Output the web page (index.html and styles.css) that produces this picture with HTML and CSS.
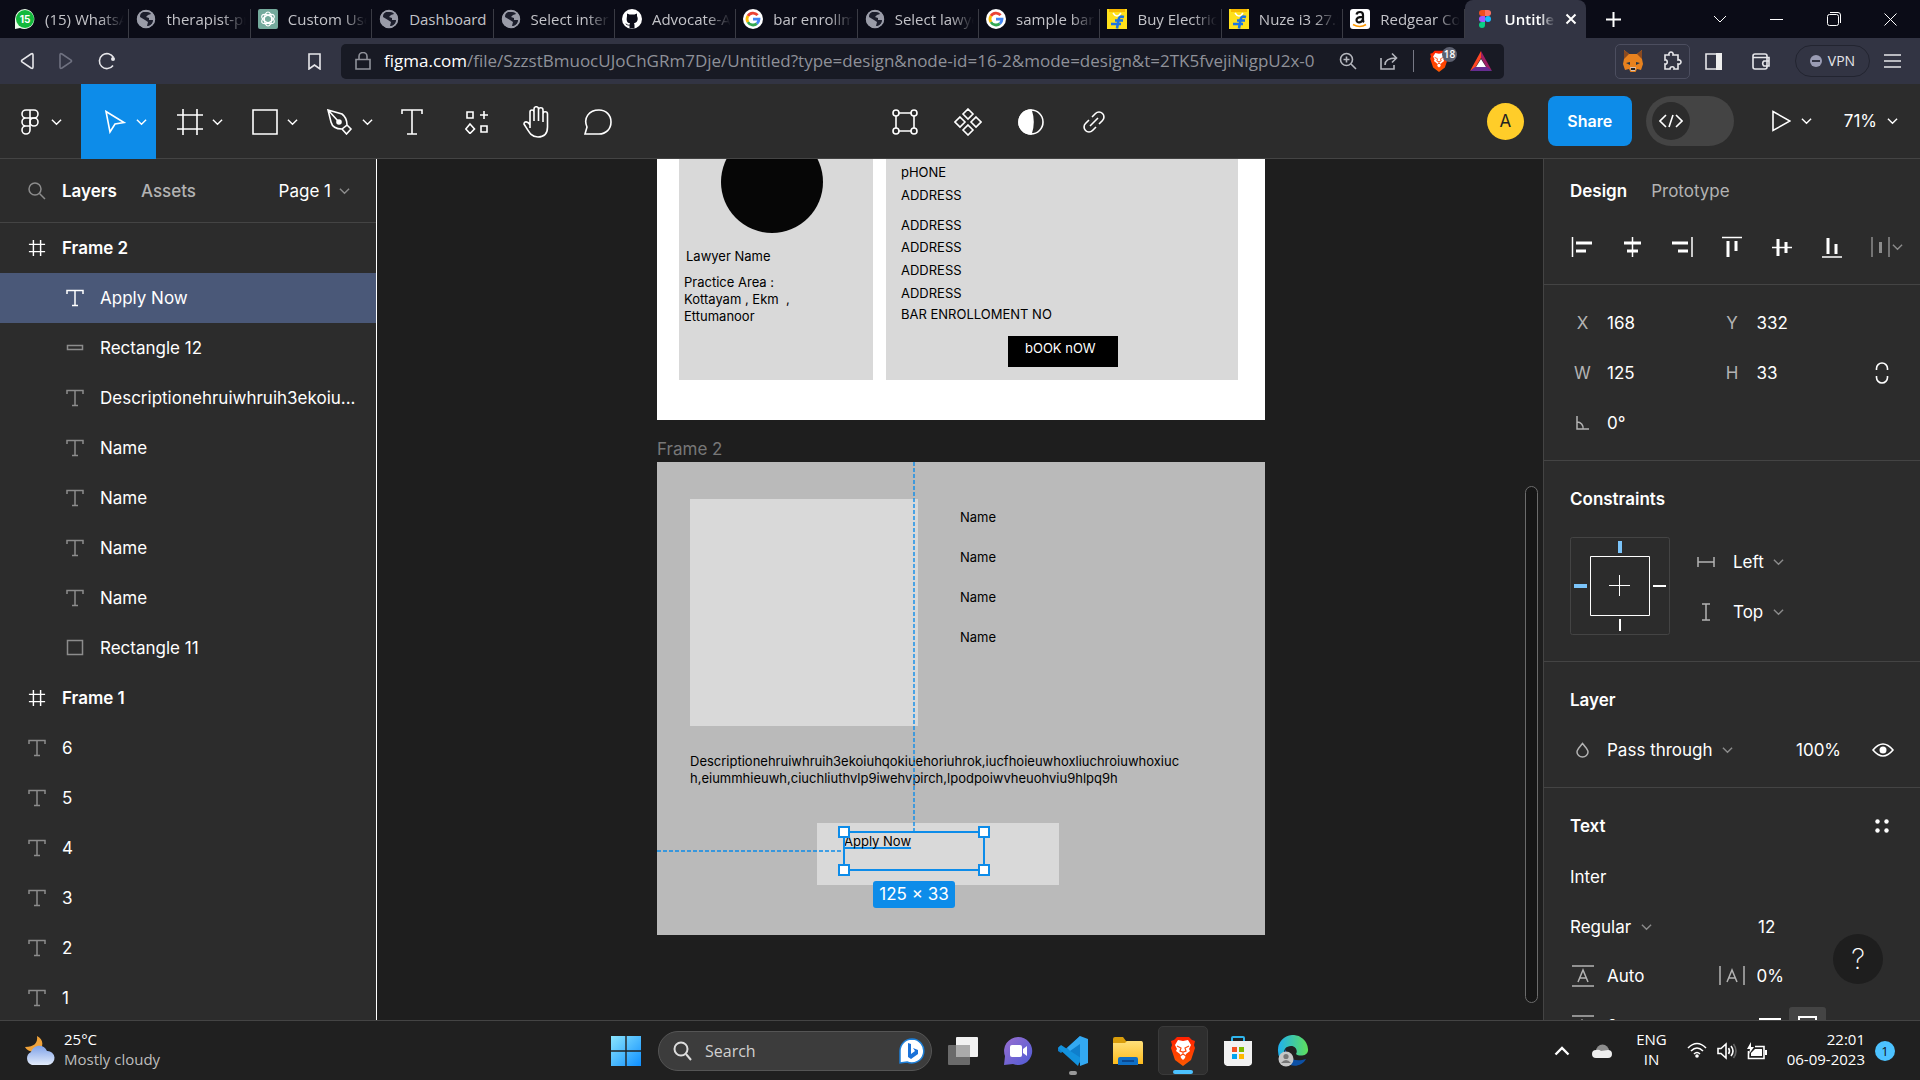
FILE: index.html
```html
<!DOCTYPE html>
<html lang="en">
<head>
<meta charset="utf-8">
<title>Untitled – Figma</title>
<link rel="stylesheet" href="styles.css">
</head>
<body>
<svg class="sprite" aria-hidden="true">
  <defs>
    <linearGradient id="g-win" x1="0" y1="0" x2="1" y2="1"><stop offset="0" stop-color="#8be5fd"/><stop offset="1" stop-color="#0e8fff"/></linearGradient>
    <linearGradient id="g-chat" x1="0" y1="0" x2="1" y2="1"><stop offset="0" stop-color="#9a6fd0"/><stop offset="1" stop-color="#4f5bd5"/></linearGradient>
    <linearGradient id="g-edge" x1="0" y1="0" x2="1" y2="0"><stop offset="0" stop-color="#1fb0f0"/><stop offset="1" stop-color="#5fe05a"/></linearGradient>
    <linearGradient id="g-folder" x1="0" y1="0" x2="0" y2="1"><stop offset="0" stop-color="#ffe07a"/><stop offset="1" stop-color="#fdbb1d"/></linearGradient>
    <linearGradient id="g-cloud" x1="0" y1="0" x2="0" y2="1"><stop offset="0" stop-color="#7fa2e8"/><stop offset="1" stop-color="#e3ecfb"/></linearGradient>
    <linearGradient id="g-brave" x1="0" y1="0" x2="0" y2="1"><stop offset="0" stop-color="#ff2000"/><stop offset="1" stop-color="#ff5a00"/></linearGradient>
  </defs>
  <symbol id="chev" viewBox="0 0 12 8"><path d="M1 1.500L6 6.500 11 1.500" fill="none" stroke="currentColor" stroke-width="1.500"/></symbol>
  <symbol id="globe" viewBox="0 0 20 20"><circle cx="10" cy="10" r="9" fill="#9a9ca8"/><path d="M9 3c3 0 5 0 6 2l-3 1-2 2 3 1v2h4c0 4-3 6-6 6l1-4-3-2-5-3c0-3 1-4 3-5z" fill="#1c1e2c"/><circle cx="10" cy="10" r="8.500" fill="none" stroke="#9a9ca8" stroke-width="1.500"/></symbol>
  <symbol id="google" viewBox="0 0 20 20"><circle cx="10" cy="10" r="10" fill="#fff"/><g fill="none" stroke-width="2.800"><path d="M14.600 6.200A6 6 0 0 0 4.900 6.900" stroke="#ea4335"/><path d="M4.900 6.900a6 6 0 0 0 0 6.200" stroke="#fbbc05"/><path d="M4.900 13.100a6 6 0 0 0 9 1.500" stroke="#34a853"/><path d="M13.900 14.600A6 6 0 0 0 16 10.200H10" stroke="#4285f4"/></g></symbol>
  <symbol id="flip" viewBox="0 0 20 20"><path d="M0 0h20v20H0z" fill="#ffe11b"/><path d="M2 0h16v3H2z" fill="#f7b800"/><path d="M6 4q4 6 8 0" fill="none" stroke="#fff" stroke-width="1.500"/><path d="M8 11.500h8M4 15h10M17 8c-4-1-5 0-5.500 3l-1.500 8.500" fill="none" stroke="#1b74e4" stroke-width="2.600"/></symbol>
  <symbol id="tee" viewBox="0 0 18 18"><path d="M1 5V1.500h16V5M9 1.500v15M6 16.500h6" fill="none" stroke="currentColor" stroke-width="1.500"/></symbol>
  <symbol id="hash" viewBox="0 0 20 20"><path d="M6 1v18M14 1v18M1 6h18M1 14h18" fill="none" stroke="currentColor" stroke-width="1.600"/></symbol>
  <symbol id="lion" viewBox="0 0 26 30"><path d="M7 1h12l3 3 3 1-1 4 1 3-4 12-8 6-8-6L1 12l1-3-1-4 3-1z" fill="url(#g-brave)"/><path d="M13 5l5-1 3 5-2 4 1 2-4 3-1 4-2 2-2-2-1-4-4-3 1-2-2-4 3-5z" fill="#fff"/><path d="M7 10l4 2-1 3 3 1 3-1-1-3 4-2M13 16v3M10 20l3-2 3 2" fill="none" stroke="#fb4a10" stroke-width="1.200"/></symbol>
</svg>

<header class="browser">
  <div class="tabbar">
    <nav class="tabs" aria-label="Open tabs">
      <a class="tab" href="#"><svg class="fav" viewBox="0 0 20 20"><path d="M10 0a10 10 0 1 1-5 19l-5 1V10A10 10 0 0 1 10 0z" fill="#e9fbe9"/><circle cx="10" cy="10" r="9" fill="#12b93c"/><text x="10" y="14" text-anchor="middle" class="fav-num">15</text></svg><span>(15) WhatsApp</span></a>
      <a class="tab" href="#"><svg class="fav"><use href="#globe"/></svg><span>therapist-profile</span></a>
      <a class="tab" href="#"><svg class="fav" viewBox="0 0 20 20"><rect width="20" height="20" rx="2" fill="#74aa9c"/><g fill="none" stroke="#fff" stroke-width="1.200"><ellipse cx="10" cy="10" rx="3.600" ry="7"/><ellipse cx="10" cy="10" rx="3.600" ry="7" transform="rotate(60 10 10)"/><ellipse cx="10" cy="10" rx="3.600" ry="7" transform="rotate(120 10 10)"/></g></svg><span>Custom User Model</span></a>
      <a class="tab whole" href="#"><svg class="fav"><use href="#globe"/></svg><span>Dashboard</span></a>
      <a class="tab" href="#"><svg class="fav"><use href="#globe"/></svg><span>Select internship</span></a>
      <a class="tab" href="#"><svg class="fav" viewBox="0 0 20 20"><circle cx="10" cy="10" r="10" fill="#fff"/><path d="M7.500 19.500v-3c-3 .6-3.300-1.600-4.300-2 2-.3 2 2 4.300 1.200l.5-1.500C5 14 4.500 11.500 4.700 9.500L5 7l0-2.500 2.500 1h5L15 4.500 15 7c2 4-.5 7-3 7.200l.5 1.500v3.800z" fill="#0b0c18"/></svg><span>Advocate-App</span></a>
      <a class="tab" href="#"><svg class="fav"><use href="#google"/></svg><span>bar enrollment</span></a>
      <a class="tab" href="#"><svg class="fav"><use href="#globe"/></svg><span>Select lawyers</span></a>
      <a class="tab" href="#"><svg class="fav"><use href="#google"/></svg><span>sample bar id</span></a>
      <a class="tab" href="#"><svg class="fav"><use href="#flip"/></svg><span>Buy Electric cycle</span></a>
      <a class="tab" href="#"><svg class="fav"><use href="#flip"/></svg><span>Nuze i3 27.5 T</span></a>
      <a class="tab" href="#"><svg class="fav" viewBox="0 0 20 20"><rect width="20" height="20" rx="3" fill="#fff"/><path d="M6.500 5.500Q7 3 10 3t3 3v5q0 1.500 1.200 2M13 7.800c-4 0-6.500.6-6.500 3.200 0 3.500 5.500 3 6.500-1" fill="none" stroke="#111" stroke-width="2.200"/><path d="M3 15.500q7 4 13 0" fill="none" stroke="#f90" stroke-width="1.600"/></svg><span>Redgear Cosmo</span></a>
      <a class="tab active" href="#" aria-current="page"><svg class="fav" viewBox="0 0 20 20"><path d="M7 1h3v6H7a3 3 0 0 1 0-6z" fill="#f24e1e"/><path d="M10 1h3a3 3 0 0 1 0 6h-3z" fill="#ff7262"/><path d="M7 7h3v6H7a3 3 0 0 1 0-6z" fill="#a259ff"/><circle cx="13" cy="10" r="3" fill="#1abcfe"/><path d="M7 13h3v3a3 3 0 1 1-3-3z" fill="#0acf83"/></svg><span>Untitled – Figma</span><svg class="tab-x" viewBox="0 0 12 12"><path d="M1.500 1.500l9 9m0-9l-9 9" stroke="#fff" stroke-width="2"/></svg></a>
    </nav>
    <button class="new-tab" aria-label="New tab"><svg width="15" height="15" viewBox="0 0 15 15"><path d="M7.500 0v15M0 7.500h15" stroke="#fff" stroke-width="2"/></svg></button>
    <div class="window-buttons">
      <button aria-label="Search tabs"><svg width="14" height="8" viewBox="0 0 14 8"><path d="M1 1l6 6 6-6" class="thin"/></svg></button>
      <button aria-label="Minimize"><svg width="13" height="13" viewBox="0 0 13 13"><path d="M0 6.500h13" class="thin"/></svg></button>
      <button aria-label="Restore"><svg width="14" height="14" viewBox="0 0 14 14"><rect x=".5" y="2.500" width="11" height="11" rx="2" class="thin"/><path d="M3 .5h8a2.500 2.500 0 0 1 2.500 2.500v8" class="thin"/></svg></button>
      <button aria-label="Close"><svg width="13" height="13" viewBox="0 0 13 13"><path d="M.5.5l12 12m0-12l-12 12" class="thin"/></svg></button>
    </div>
  </div>

  <div class="navbar">
    <div class="nav-left">
      <button aria-label="Back"><svg width="14" height="18" viewBox="0 0 14 18"><path d="M13 3v12q0 2-2 1L2 10q-1-1 0-2l9-6q2-1 2 1z" class="ln"/></svg></button>
      <button class="dim" aria-label="Forward"><svg width="14" height="18" viewBox="0 0 14 18"><path d="M1 3v12q0 2 2 1l9-6q1-1 0-2L3 2Q1 1 1 3z" class="ln"/></svg></button>
      <button aria-label="Reload"><svg width="18" height="18" viewBox="0 0 18 18"><path d="M15 13.500a7.500 7.500 0 1 1 .5-8" class="ln"/><circle cx="15" cy="7" r="2" fill="currentColor"/></svg></button>
      <button class="bookmark" aria-label="Bookmark"><svg width="13" height="17" viewBox="0 0 13 17"><path d="M1 1h11v15l-5.500-4L1 16z" class="ln"/></svg></button>
    </div>
    <div class="address">
      <svg class="lock" width="16" height="18" viewBox="0 0 16 18"><path d="M1 7.500h14v9.500H1zM4 7V4.500a4 4 0 0 1 8 0V7" class="ln"/></svg>
      <div class="url"><b>figma.com</b>/file/SzzstBmuocUJoChGRm7Dje/Untitled?type=design&amp;node-id=16-2&amp;mode=design&amp;t=2TK5fvejiNigpU2x-0</div>
      <div class="address-tools">
        <svg width="18" height="18" viewBox="0 0 18 18"><circle cx="7.500" cy="7.500" r="6" class="ln"/><path d="M12 12l5 5M7.500 4.500v6M4.500 7.500h6" class="ln"/></svg>
        <svg width="18" height="18" viewBox="0 0 18 18"><path d="M1 6v11h13v-4M5 13c0-5 4-7 11-7M12 1.500L16.500 6 12 10.500" class="ln"/></svg>
        <i class="bar"></i>
        <span class="shield"><svg width="20" height="22"><use href="#lion"/></svg><em>18</em></span>
        <svg width="22" height="20" viewBox="0 0 22 20"><path d="M11 0L0 20l5-3 6-10z" fill="#ff4724"/><path d="M11 0l11 20-5-3L11 7z" fill="#9e1f63"/><path d="M0 20l5-4h12l5 4z" fill="#662d91"/><path d="M11 8l5 8H6z" fill="#fff"/></svg>
      </div>
    </div>
    <div class="nav-right">
      <div class="ext">
        <svg width="20" height="22" viewBox="0 0 20 22"><path d="M1 0l5 4h8l5-4v9l1 5-2 6-4-1-2 4H8l-2-4-4 1-2-6 1-5z" fill="#e8821e"/><path d="M1 0l5 4-5 5zM19 0l-5 4 5 5z" fill="#8a4a20"/><path d="M7 12l-4 1 4 2zM13 12l4 1-4 2z" fill="#233447"/><path d="M7 17l1 4h4l1-4z" fill="#d7c1b3"/><path d="M8 18h4v2H8z" fill="#222"/></svg>
        <svg width="19" height="20" viewBox="0 0 19 20"><path d="M2 4h4c-1-4 5-4 4 0h5v5c4-1 4 5 0 4v5h-4c1-3-4-3-4 0H2v-5c3 1 3-5 0-4z" class="ln"/></svg>
      </div>
      <svg class="side" width="17" height="17" viewBox="0 0 17 17"><path d="M1 1h15v15H1z" class="ln"/><path d="M11 0h6v17h-6z" fill="#eee"/></svg>
      <svg class="wallet" width="18" height="17" viewBox="0 0 18 17"><rect x="1" y="1" width="14" height="15" rx="2" class="ln"/><path d="M1 4.500h16v8.500h-5a3 3 0 0 1 0-5h5" class="ln"/></svg>
      <button class="vpn"><i></i>VPN</button>
      <button aria-label="Menu"><svg width="17" height="14" viewBox="0 0 17 14"><path d="M0 1h17M0 7h17M0 13h17" class="ln"/></svg></button>
    </div>
  </div>
</header>

<div class="toolbar">
  <div class="tools">
    <button class="tool wide home" aria-label="Main menu"><svg width="18" height="26" viewBox="0 0 18 26" class="w"><path d="M9 1H5a4 4 0 0 0 0 8h4zm0 0h4a4 4 0 0 1 0 8H9zM9 9H5a4 4 0 0 0 0 8h4zM9 17H5a4 4 0 1 0 4 4z"/><circle cx="13" cy="13" r="4"/></svg><svg class="ch"><use href="#chev"/></svg></button>
    <button class="tool wide on" aria-label="Move"><svg width="22" height="24" viewBox="0 0 22 24" class="w"><path d="M2 1.500l18 11-9 1.500-5 8z"/></svg><svg class="ch"><use href="#chev"/></svg></button>
    <button class="tool wide" aria-label="Frame"><svg width="26" height="26" viewBox="0 0 26 26" class="w"><path d="M6 0v26M20 0v26M0 6h26M0 20h26"/></svg><svg class="ch"><use href="#chev"/></svg></button>
    <button class="tool wide" aria-label="Rectangle"><svg width="26" height="26" viewBox="0 0 26 26" class="w"><path d="M1 1h24v24H1z"/></svg><svg class="ch"><use href="#chev"/></svg></button>
    <button class="tool wide" aria-label="Pen"><svg width="26" height="26" viewBox="0 0 26 26" class="w"><path d="M1 1l14 4c4 3 5 6 5 11l-5 4C8 20 5 17 4 13zM1 1l10 11M20 16l4 4-4.500 5-4.500-5"/><circle cx="12" cy="13" r="2" fill="#fff"/></svg><svg class="ch"><use href="#chev"/></svg></button>
    <button class="tool" aria-label="Text"><svg width="22" height="26" viewBox="0 0 22 26" class="w"><path d="M1 5V1h20v4M11 1v24M6 25h10"/></svg></button>
    <button class="tool res" aria-label="Resources"><svg width="24" height="24" viewBox="0 0 24 24" class="w"><path d="M2 2h6v6H2zM19 1v8M15 5h8M16 16h6v6h-6zM5 14l4.500 5L5 23.500.800 19z"/></svg></button>
    <button class="tool" aria-label="Hand"><svg width="28" height="32" viewBox="0 0 28 32" class="w"><path d="M8 19V6a2 2 0 0 1 4 0v9V3a2 2 0 0 1 4.500 0v12V4a2 2 0 0 1 4.500 0v12V8a2 2 0 0 1 4.500 0v13c0 7-4 10-9.500 10-7 0-9-5-14-13 0-3 4-3 6 1v3"/></svg></button>
    <button class="tool" aria-label="Comment"><svg width="28" height="26" viewBox="0 0 28 26" class="w"><path d="M1 25l2-7C-1 9 5 1 15 1c7 0 12 5 12 12s-5 12-12 12z"/></svg></button>
  </div>
  <div class="tools mid">
    <button class="tool" aria-label="Edit object"><svg width="26" height="26" viewBox="0 0 26 26" class="w"><path d="M7 4h12M7 22h12M4 7v12M22 7v12"/><circle cx="4" cy="4" r="3"/><circle cx="22" cy="4" r="3"/><circle cx="4" cy="22" r="3"/><circle cx="22" cy="22" r="3"/></svg></button>
    <button class="tool" aria-label="Create component"><svg width="28" height="28" viewBox="0 0 28 28" class="w"><path d="M14 1l5 5-5 5-5-5zM14 17l5 5-5 5-5-5zM6 9l5 5-5 5-5-5zM22 9l5 5-5 5-5-5z"/></svg></button>
    <button class="tool" aria-label="Use as mask"><svg width="26" height="26" viewBox="0 0 26 26" class="w"><circle cx="13" cy="13" r="12"/><path d="M13 1q4 12 0 24A12 12 0 0 1 13 1z" fill="#fff"/></svg></button>
    <button class="tool" aria-label="Create link"><svg width="22" height="22" viewBox="0 0 22 22" class="w"><path d="M9 6l3.500-3.500a4.500 4.500 0 0 1 7 7L16 13M13 16l-3.500 3.500a4.500 4.500 0 0 1-7-7L6 9M7 15l8-8"/></svg></button>
  </div>
  <div class="tools right">
    <span class="avatar">A</span>
    <button class="share">Share</button>
    <button class="dev" aria-label="Dev Mode"><i><svg width="24" height="14" viewBox="0 0 24 14" class="w"><path d="M7 1L1 7l6 6M17 1l6 6-6 6M14 1l-4 12"/></svg></i></button>
    <button class="play" aria-label="Present"><svg width="19" height="22" viewBox="0 0 19 22" class="w"><path d="M1 1.500l17 9.500-17 9.500z"/></svg><svg class="ch"><use href="#chev"/></svg></button>
    <button class="zoom">71%<svg class="ch"><use href="#chev"/></svg></button>
  </div>
</div>

<main class="work">
  <aside class="layers">
    <div class="panel-head">
      <svg class="find" width="18" height="18" viewBox="0 0 18 18"><circle cx="7" cy="7" r="6"/><path d="M11.500 11.500L17 17"/></svg>
      <button class="strong">Layers</button>
      <button class="mute">Assets</button>
      <button class="page">Page 1<svg class="ch sm"><use href="#chev"/></svg></button>
    </div>
    <ul class="tree">
      <li class="top"><svg class="ic"><use href="#hash"/></svg>Frame 2</li>
      <li class="kid sel"><svg class="ic"><use href="#tee"/></svg>Apply Now</li>
      <li class="kid"><svg class="ic" viewBox="0 0 18 18"><path d="M1.500 6.500h15v4h-15z" class="box"/></svg>Rectangle 12</li>
      <li class="kid"><svg class="ic"><use href="#tee"/></svg>Descriptionehruiwhruih3ekoiu...</li>
      <li class="kid"><svg class="ic"><use href="#tee"/></svg>Name</li>
      <li class="kid"><svg class="ic"><use href="#tee"/></svg>Name</li>
      <li class="kid"><svg class="ic"><use href="#tee"/></svg>Name</li>
      <li class="kid"><svg class="ic"><use href="#tee"/></svg>Name</li>
      <li class="kid"><svg class="ic" viewBox="0 0 18 18"><path d="M1.500 1.500h15v14h-15z" class="box"/></svg>Rectangle 11</li>
      <li class="top"><svg class="ic"><use href="#hash"/></svg>Frame 1</li>
      <li><svg class="ic"><use href="#tee"/></svg>6</li>
      <li><svg class="ic"><use href="#tee"/></svg>5</li>
      <li><svg class="ic"><use href="#tee"/></svg>4</li>
      <li><svg class="ic"><use href="#tee"/></svg>3</li>
      <li><svg class="ic"><use href="#tee"/></svg>2</li>
      <li><svg class="ic"><use href="#tee"/></svg>1</li>
    </ul>
  </aside>

  <section class="canvas" aria-label="Canvas">
    <div class="artboard frame1">
      <div class="shape card-a"></div>
      <div class="shape card-b"></div>
      <div class="shape photo"></div>
      <p class="t lawyer">Lawyer Name</p>
      <p class="t practice">Practice Area :<br>Kottayam , Ekm&nbsp; ,<br>Ettumanoor</p>
      <p class="t phone">pHONE</p>
      <p class="t ad1">ADDRESS</p>
      <p class="t ad2">ADDRESS</p>
      <p class="t ad3">ADDRESS</p>
      <p class="t ad4">ADDRESS</p>
      <p class="t ad5">ADDRESS</p>
      <p class="t bar-no">BAR ENROLLOMENT NO</p>
      <div class="shape book"></div>
      <p class="t book-text">bOOK nOW</p>
    </div>
    <span class="frame-label">Frame 2</span>
    <div class="artboard frame2">
      <div class="shape rect11"></div>
      <p class="t n1">Name</p>
      <p class="t n2">Name</p>
      <p class="t n3">Name</p>
      <p class="t n4">Name</p>
      <p class="t desc">Descriptionehruiwhruih3ekoiuhqokiuehoriuhrok,iucfhoieuwhoxliuchroiuwhoxiuc<br>h,eiummhieuwh,ciuchliuthvlp9iwehvpirch,lpodpoiwvheuohviu9hlpq9h</p>
      <div class="shape rect12"></div>
      <p class="t apply">Apply Now</p>
      <svg class="guides" width="608" height="473" viewBox="0 0 608 473"><path d="M257 0v370M0 389h186"/></svg>
      <div class="selection"><i class="h tl"></i><i class="h tr"></i><i class="h bl"></i><i class="h br"></i></div>
      <span class="size">125 × 33</span>
    </div>
    <div class="scroll"></div>
  </section>

  <aside class="props">
    <div class="tabs-row"><button class="strong">Design</button><button class="mute">Prototype</button></div>
    <div class="align">
      <svg viewBox="0 0 22 22"><path d="M1.500 1v20" class="l1"/><path d="M5 7h16M5 15h10" class="l3"/></svg>
      <svg viewBox="0 0 22 22"><path d="M11.500 1v20" class="l1"/><path d="M3 7h17M6 15h11" class="l3"/></svg>
      <svg viewBox="0 0 22 22"><path d="M21 1v20" class="l1"/><path d="M1 7h16M7 15h10" class="l3"/></svg>
      <svg viewBox="0 0 22 22"><path d="M1 1.500h20" class="l1"/><path d="M7 5v16M15 5v10" class="l3"/></svg>
      <svg viewBox="0 0 22 22"><path d="M1 11.500h20" class="l1"/><path d="M7 3v17M15 6v11" class="l3"/></svg>
      <svg viewBox="0 0 22 22"><path d="M1 21h20" class="l1"/><path d="M7 2v16M15 8v10" class="l3"/></svg>
      <svg viewBox="0 0 22 22" class="off"><path d="M1 1v20M18 1v20" class="l1"/><path d="M9.500 6v11" class="l3"/></svg>
      <svg class="ch sm"><use href="#chev"/></svg>
    </div>
    <hr>
    <div class="grid geo">
      <label for="px">X</label><input id="px" value="168"><label for="py">Y</label><input id="py" value="332"><span></span>
      <label for="pw">W</label><input id="pw" value="125"><label for="ph">H</label><input id="ph" value="33"><button aria-label="Constrain proportions"><svg width="14" height="22" viewBox="0 0 14 22"><path d="M1.500 8V6.500a5 5 0 0 1 11 0V8M1.500 14v1.500a5 5 0 0 0 11 0V14" class="ln"/></svg></button>
      <label for="pr"><svg width="13" height="14" viewBox="0 0 13 14" aria-label="Rotation"><path d="M1 0v13h12M1 6a6 6 0 0 1 6 7" class="ln g"/></svg></label><input id="pr" value="0°">
    </div>
    <hr>
    <h2>Constraints</h2>
    <div class="constraints">
      <svg width="100" height="98" viewBox="0 0 100 98"><rect x=".5" y=".5" width="99" height="97" rx="2" fill="none" stroke="#444"/><path d="M20.500 19.500h59v59h-59z" fill="none" stroke="#fff"/><path d="M49.500 38v21M39 48.500h21" stroke="#fff"/><path d="M50 4v12M4 49h13" stroke="#7bc4fa" stroke-width="4"/><path d="M50 82v12M83 49h13" stroke="#fff" stroke-width="2"/></svg>
      <div class="cons-list">
        <div><svg width="18" height="10" viewBox="0 0 18 10"><path d="M1 0v10M17 0v10M1 5h16" class="ln g"/></svg><select aria-label="Horizontal constraint"><option>Left</option></select><svg class="ch sm"><use href="#chev"/></svg></div>
        <div><svg width="18" height="18" viewBox="0 0 18 18"><path d="M5 1h8M5 17h8M9 1v16" class="ln g"/></svg><select aria-label="Vertical constraint"><option>Top</option></select><svg class="ch sm"><use href="#chev"/></svg></div>
      </div>
    </div>
    <hr>
    <h2>Layer</h2>
    <div class="blend">
      <svg width="25" height="16" viewBox="0 0 25 16"><path d="M12.500 1.500C9 6 7 7.500 7 10a5.500 5 0 0 0 11 0c0-2.500-2-4-5.500-8.500z" class="ln g"/></svg>
      <select aria-label="Blend mode"><option>Pass through</option></select><svg class="ch sm"><use href="#chev"/></svg>
      <input class="opacity" aria-label="Opacity" value="100%">
      <button aria-label="Toggle visibility"><svg width="22" height="14" viewBox="0 0 22 14"><path d="M1 7q10-12 20 0-10 12-20 0z" class="ln"/><circle cx="11" cy="7" r="3.500" fill="#fff"/></svg></button>
    </div>
    <hr>
    <div class="text-head"><h2>Text</h2><button aria-label="Text styles"><svg width="14" height="14" viewBox="0 0 14 14" fill="#fff"><circle cx="2.500" cy="2.500" r="2.200"/><circle cx="11.500" cy="2.500" r="2.200"/><circle cx="2.500" cy="11.500" r="2.200"/><circle cx="11.500" cy="11.500" r="2.200"/></svg></button></div>
    <div class="font-row"><input aria-label="Font family" value="Inter"></div>
    <div class="weight-row"><div><select aria-label="Font weight"><option>Regular</option></select><svg class="ch sm"><use href="#chev"/></svg></div><input aria-label="Font size" value="12"></div>
    <div class="grid type">
      <label for="lh"><svg width="22" height="22" viewBox="0 0 22 22" aria-label="Line height"><path d="M0 1h22M0 21h22M6 17l5-12 5 12M8 13h6" class="ln g"/></svg></label><input id="lh" value="Auto">
      <label for="ls"><svg width="26" height="20" viewBox="0 0 26 20" aria-label="Letter spacing"><path d="M1 0v19M25 0v19M8 16l5-12 5 12M10 12h6" class="ln g"/></svg></label><input id="ls" value="0%"><span></span>
      <label for="ps"><svg width="22" height="22" viewBox="0 0 22 22" aria-label="Paragraph spacing"><path d="M0 1h22M5 10l5-5 5 5M10 5v16" class="ln g"/></svg></label><input id="ps" value="0">
      <svg class="resize" width="100" height="38" viewBox="0 0 100 38"><rect x="32" width="37" height="38" rx="3" fill="#444"/><path d="M2 12h22" stroke="#fff" stroke-width="2"/><path d="M42 24V10h17v14z" fill="none" stroke="#fff" stroke-width="2"/></svg>
    </div>
    <button class="help" aria-label="Help">?</button>
  </aside>
</main>

<footer class="taskbar">
  <div class="weather">
    <svg width="32" height="32" viewBox="0 0 32 32"><path d="M13 1c7 3 7 12 1 15-5 2-11 0-13-4 9 0 13-4 12-11z" fill="#f0a33a"/><path d="M8 30a7 7 0 0 1-1-13c3-8 13-8 16-1a7 7 0 0 1 1 14z" fill="url(#g-cloud)"/></svg>
    <p>25°C<br><small>Mostly cloudy</small></p>
  </div>
  <div class="dock">
    <button aria-label="Start"><svg width="30" height="30" viewBox="0 0 30 30"><path d="M0 0h14.300v14.300H0zM15.700 0H30v14.300H15.700zM0 15.700h14.300V30H0zM15.700 15.700H30V30H15.700z" fill="url(#g-win)"/></svg></button>
    <label class="search"><svg width="20" height="20" viewBox="0 0 20 20"><circle cx="8" cy="8" r="6.500" fill="none" stroke="#ddd" stroke-width="2"/><path d="M13 13l5 6" stroke="#ddd" stroke-width="2"/></svg><input type="search" aria-label="Search" placeholder="Search"><svg width="26" height="26" viewBox="0 0 26 26"><path d="M13 1a12 12 0 1 1-5 23l-7 1V13A12 12 0 0 1 13 1z" fill="#fff" stroke="#1d7fd8" stroke-width="1.500"/><path d="M9 5l3 1v10l4-3-2-3 5 2v4l-7 5-3-2z" fill="#1b72d8"/></svg></label>
    <button aria-label="Task view"><svg width="30" height="28" viewBox="0 0 30 28"><rect y="8" width="22" height="20" rx="1" fill="#6a6a6a"/><rect x="8" width="22" height="20" rx="1" fill="#f2f2f2"/><rect x="8" y="8" width="14" height="12" fill="#ababab"/></svg></button>
    <button aria-label="Chat"><svg width="30" height="30" viewBox="0 0 30 30"><path d="M15 1a14 14 0 1 1-5 27l-9 1 1-9A14 14 0 0 1 15 1z" fill="url(#g-chat)"/><rect x="7" y="9" width="12" height="12" rx="2" fill="#fff"/><path d="M20 13l4-3v10l-4-3z" fill="#fff"/></svg></button>
    <button class="running" aria-label="Visual Studio Code"><svg width="30" height="30" viewBox="0 0 30 30"><path d="M22 0L3 17l-3-2v-3l2-2 20 17z" fill="#0f7fcc"/><path d="M3 9l-3 3 20 18 3-8z" fill="#1392dd"/><path d="M22 0l8 3v24l-8 3V8L12 15l-3-3z" fill="#33a9f2"/></svg></button>
    <button aria-label="File Explorer"><svg width="30" height="28" viewBox="0 0 30 28"><path d="M0 2q0-2 2-2h8l3 4h16v10H0z" fill="#d99d0b"/><path d="M0 6h12l2-2h14q2 0 2 2v21H0z" fill="url(#g-folder)"/><path d="M5 28v-6q0-2 2-2h16q2 0 2 2v6z" fill="#0f6fc6"/><path d="M9 24h12" stroke="#0a3d80" stroke-width="1.500"/></svg></button>
    <button class="current" aria-label="Brave"><svg width="26" height="30"><use href="#lion"/></svg></button>
    <button aria-label="Microsoft Store"><svg width="30" height="30" viewBox="0 0 30 30"><path d="M9 6V2q0-1 1-1h10q1 0 1 1v4" fill="none" stroke="#2fb5ec" stroke-width="2"/><path d="M1 5h28v22q0 2-3 3H4q-3-1-3-3z" fill="#f1f1f1"/><path d="M9 11h5v5H9z" fill="#f25022"/><path d="M16 11h5v5h-5z" fill="#7fba00"/><path d="M9 18h5v5H9z" fill="#00a4ef"/><path d="M16 18h5v5h-5z" fill="#ffb900"/></svg></button>
    <button aria-label="Edge"><svg width="32" height="32" viewBox="0 0 32 32"><path d="M1 16a15 15 0 0 1 30-2c1 7-9 8-12 5 2-3 0-8-5-8-8 0-9 9-5 17Q1 25 1 16z" fill="url(#g-edge)"/><path d="M9 14c-1 8 8 14 20 10-3 6-10 8-16 6-6-3-8-10-4-16z" fill="#0c50a5"/><circle cx="9" cy="24" r="7.500" fill="#c6c6c6"/><circle cx="9" cy="21.500" r="2.600" fill="#777"/><path d="M4 28q5-6 10 0z" fill="#777"/></svg></button>
  </div>
  <div class="tray">
    <svg width="16" height="10" viewBox="0 0 16 10"><path d="M1.500 8.500L8 2l6.500 6.500" fill="none" stroke="#fff" stroke-width="2.400"/></svg>
    <svg class="cloud" width="20" height="14" viewBox="0 0 20 14"><path d="M4 7a6.500 6.500 0 0 1 13 0z" fill="#8d8d8d"/><path d="M4 14a4 4 0 0 1 0-8q3-1 5 1l7-1a4 4 0 0 1 0 8z" fill="#eee"/></svg>
    <p class="lang">ENG<br>IN</p>
    <div class="status">
      <svg width="20" height="16" viewBox="0 0 20 16"><path d="M1 6q9-9 18 0M4 9q6-6 12 0M7 12q3-3 6 0" class="ln"/><circle cx="10" cy="14" r="1.800" fill="#fff"/></svg>
      <svg width="20" height="18" viewBox="0 0 20 18"><path d="M1 6.500h3L9 2v14l-5-4.500H1zM11.500 6q2 3 0 6M14 4q4 5 0 10" class="ln"/><path d="M16.500 2q5 7 0 14" class="ln" stroke-opacity=".3"/></svg>
      <svg width="20" height="18" viewBox="0 0 20 18"><path d="M8 4.500h9v12H1.500V9" class="ln"/><path d="M8 7h7v7H4v-3zM4 0L0 7h3l-1 5 5-7H4zM18 8h2v5h-2z" fill="#fff"/></svg>
    </div>
    <p class="clock">22:01<br>06-09-2023</p>
    <span class="count">1</span>
  </div>
</footer>
</body>
</html>
```
FILE: styles.css
```css
* { box-sizing: border-box; }
html, body { margin: 0; height: 100%; }
body {
  display: flex;
  flex-direction: column;
  overflow: hidden;
  background: #1e1e1e;
  color: #fff;
  font: 17px/24px Inter, sans-serif;
}
button, input, select {
  margin: 0;
  padding: 0;
  border: 0;
  background: none;
  color: inherit;
  font: inherit;
  appearance: none;
  outline: 0;
}
button { display: flex; align-items: center; justify-content: center; }
input { width: 100%; min-width: 0; }
p, h2, ul { margin: 0; padding: 0; }
a { color: inherit; text-decoration: none; }
svg { display: block; flex: none; }
.sprite { position: absolute; width: 0; height: 0; }
.ln { fill: none; stroke: currentColor; stroke-width: 1.6; }
.ln.g { stroke: #b3b3b3; stroke-width: 1.5; }
.thin { fill: none; stroke: #fff; stroke-width: 1; }
.w { fill: none; stroke: #fff; stroke-width: 1.6; }
.ch { width: 11px; height: 8px; }
.ch.sm { color: #8c8c8c; }

/* Browser chrome */
.browser { font-family: "Open Sans", sans-serif; flex: none; }
.tabbar { display: flex; height: 38px; padding-left: 8px; background: #0b0c17; }
.tabs { display: grid; grid-template-columns: repeat(13, minmax(0, 1fr)); flex: 0 1 1578px; min-width: 0; }
.tab {
  display: flex;
  align-items: center;
  gap: 10px;
  height: 38px;
  padding: 0 5px 0 7px;
  color: #c3c3c8;
  font-size: 15px;
  background: linear-gradient(#3a3b44, #3a3b44) right bottom / 1px 29px no-repeat;
}
.tab span {
  flex: 1;
  overflow: hidden;
  white-space: nowrap;
  -webkit-mask-image: linear-gradient(90deg, #000 70%, transparent);
  mask-image: linear-gradient(90deg, #000 70%, transparent);
}
.tab.whole span { -webkit-mask-image: none; mask-image: none; }
.tab.active { background: #323443; border-radius: 8px 8px 0 0; color: #fff; font-weight: 600; padding: 0 9px 0 10px; }
.fav { width: 20px; height: 20px; }
.fav-num { font: bold 10px Inter, sans-serif; fill: #fff; }
.tab-x { width: 12px; height: 12px; }
.new-tab { width: 54px; }
.window-buttons { display: flex; margin-left: auto; padding-right: 1px; }
.window-buttons button { width: 57px; }

.navbar { display: flex; align-items: center; height: 46px; background: #323443; color: #e6e6ea; }
.nav-left { display: flex; align-items: center; width: 341px; padding: 0 20px; gap: 25px; flex: none; }
.nav-left .dim { color: #6f7180; }
.nav-left .bookmark { margin-left: auto; }
.address { flex: 0 1 1163px; min-width: 0; display: flex; align-items: center; height: 35px; padding: 0 12px 0 14px; border-radius: 5px; background: #181a24; color: #b4b6bd; }
.lock { color: #8f9199; }
.url { flex: 1; margin-left: 13px; overflow: hidden; white-space: nowrap; font-size: 17px; color: #8f9199; }
.url b { font-weight: 400; color: #fff; }
.address-tools { display: flex; align-items: center; }
.address-tools svg + svg { margin-left: 23px; }
.address-tools .bar { width: 1px; height: 22px; margin: 0 15px; background: #777985; }
.shield { position: relative; width: 41px; }
.shield em { position: absolute; left: 13px; top: -3px; width: 15px; height: 15px; border-radius: 8px; background: #5d6170; color: #fff; font: 600 10px/15px "Open Sans", sans-serif; text-align: center; }
.nav-right { display: flex; align-items: center; margin-left: auto; padding-right: 19px; }
.ext { display: flex; align-items: center; justify-content: space-between; width: 75px; height: 35px; padding: 0 7px; margin-right: 15px; border: 1px solid #4c4e5f; border-radius: 5px; }
.wallet { margin: 0 25px 0 30px; }
.vpn { gap: 6px; width: 75px; height: 32px; margin-right: 14px; border: 1px solid #222430; border-radius: 16px; font-size: 14px; }
.vpn i { width: 12px; height: 12px; border-radius: 6px; background: linear-gradient(#323443, #323443) center / 8px 2px no-repeat #9a9cb4; }

/* Figma toolbar */
.toolbar { display: flex; flex: none; height: 75px; background: #2c2c2c; border-bottom: 1px solid #444; }
.tools { display: flex; }
.tool { width: 62px; height: 75px; }
.tool.wide { width: 75px; gap: 9px; padding-left: 12px; }
.tool.home { width: 81px; gap: 12px; padding-left: 2px; }
.tool.on { background: #0d8ce9; padding-left: 14px; gap: 10px; }
.tool.res { padding-left: 5px; }
.mid { margin-left: 244px; }
.mid .tool { width: 63px; }
.right { align-items: center; margin-left: auto; padding-right: 22px; }
.avatar { width: 37px; height: 37px; margin-right: 24px; border-radius: 50%; background: #ffcd29; color: #222; line-height: 37px; text-align: center; }
.share { width: 84px; height: 50px; margin-right: 14px; border-radius: 8px; background: #0d8ce9; font-size: 16px; font-weight: 600; }
.dev { justify-content: flex-start; width: 88px; height: 50px; padding: 6px; border-radius: 25px; background: #444; }
.dev i { display: flex; align-items: center; justify-content: center; width: 38px; height: 38px; border-radius: 50%; background: #2c2c2c; }
.play { gap: 10px; margin: 0 32px 0 38px; }
.zoom { gap: 10px; }

/* Workspace */
.work { flex: 1; min-height: 0; display: flex; border-bottom: 1px solid #444; }
.layers { flex: none; width: 377px; background: #2c2c2c; border-right: 1px solid #fff; overflow: hidden; }
.panel-head { display: flex; align-items: center; height: 64px; padding: 0 26px 0 28px; border-bottom: 1px solid #444; }
.find { margin-right: 16px; fill: none; stroke: #8c8c8c; stroke-width: 1.5; }
.strong { font-weight: 600; }
.mute { color: #b3b3b3; }
.panel-head .mute { margin-left: 24px; font-weight: 500; }
.page { margin-left: auto; gap: 8px; }
.tree { list-style: none; }
.tree li { display: flex; align-items: center; gap: 16px; height: 50px; padding-left: 28px; white-space: nowrap; }
.tree .kid { padding-left: 66px; }
.tree .top { font-weight: 600; }
.tree .sel { background: #4a5878; }
.ic { width: 18px; height: 18px; color: #8c8c8c; }
.top .ic, .sel .ic { color: #fff; }
.box { fill: none; stroke: #8c8c8c; stroke-width: 1.5; }

.canvas { flex: 1; min-width: 0; position: relative; overflow: hidden; }
.artboard, .shape, .t, .frame-label, .guides, .selection, .h, .size, .scroll { position: absolute; }
.t { color: #000; font-size: 13px; line-height: 17px; white-space: nowrap; }
.frame1 { left: 280px; top: -100px; width: 608px; height: 361px; background: #fff; }
.shape { background: #d9d9d9; }
.card-a { left: 22px; top: 20px; width: 194px; height: 301px; }
.card-b { left: 229px; top: 20px; width: 352px; height: 301px; }
.photo { left: 64px; top: 72px; width: 102px; height: 102px; border-radius: 50%; background: #060606; }
.lawyer { left: 29px; top: 189px; }
.practice { left: 27px; top: 215px; }
.phone { left: 244px; top: 105px; }
.ad1 { left: 244px; top: 128px; }
.ad2 { left: 244px; top: 158px; }
.ad3 { left: 244px; top: 180px; }
.ad4 { left: 244px; top: 203px; }
.ad5 { left: 244px; top: 226px; }
.bar-no { left: 244px; top: 247px; }
.book { left: 351px; top: 277px; width: 110px; height: 31px; background: #000; }
.book-text { left: 368px; top: 281px; color: #fff; }
.frame-label { left: 280px; top: 278px; color: #777; }
.frame2 { left: 280px; top: 303px; width: 608px; height: 473px; background: #bababa; }
.rect11 { left: 33px; top: 37px; width: 228px; height: 227px; }
.n1 { left: 303px; top: 47px; }
.n2 { left: 303px; top: 87px; }
.n3 { left: 303px; top: 127px; }
.n4 { left: 303px; top: 167px; }
.desc { left: 33px; top: 291px; }
.rect12 { left: 160px; top: 361px; width: 242px; height: 62px; }
.apply { left: 187px; top: 371px; text-decoration: underline #0d8ce9 2px; text-underline-offset: 1px; text-decoration-skip-ink: none; }
.guides { left: 0; top: 0; fill: none; stroke: #0d8ce9; stroke-width: 1.4; stroke-dasharray: 4 2; }
.selection { left: 186px; top: 369px; width: 142px; height: 40px; border: 2px solid #0d8ce9; }
.h { width: 12px; height: 12px; border: 2px solid #0d8ce9; background: #fff; }
.tl { left: -7px; top: -7px; }
.tr { right: -7px; top: -7px; }
.bl { left: -7px; bottom: -7px; }
.br { right: -7px; bottom: -7px; }
.size { left: 216px; top: 419px; width: 82px; height: 27px; border-radius: 3px; background: #0d8ce9; line-height: 27px; text-align: center; }
.scroll { right: 5px; top: 327px; bottom: 17px; width: 13px; border: 1px solid #6c6c6c; border-radius: 7px; background: #161616; }

/* Inspector */
.props { position: relative; flex: none; width: 377px; background: #2c2c2c; border-left: 1px solid #444; overflow: hidden; }
.props hr { height: 1px; margin: 0; border: 0; background: #444; }
.props h2 { padding: 25px 26px 0; font-size: 17px; line-height: 26px; font-weight: 600; }
.tabs-row { display: flex; gap: 24px; height: 64px; padding-left: 26px; }
.align { display: flex; align-items: center; gap: 28px; height: 61px; padding: 0 0 14px 27px; }
.align svg { width: 22px; height: 22px; }
.align .ch { width: 11px; height: 8px; margin-left: -29px; }
.l1 { stroke: #fff; stroke-width: 1.5; }
.l3 { stroke: #fff; stroke-width: 3; }
.off .l1, .off .l3 { stroke: #8c8c8c; }
.grid { display: grid; grid-template-columns: 37px 1fr 37px 1fr 25px; padding: 0 26px; align-items: center; }
.grid label { display: flex; justify-content: center; width: 25px; color: #b3b3b3; }
.geo { grid-auto-rows: 50px; padding-top: 13px; padding-bottom: 12px; }
.constraints { display: flex; gap: 26px; padding: 25px 26px 24px; }
.cons-list > div { display: flex; align-items: center; height: 50px; }
.cons-list > div > svg:first-child { width: 20px; margin-right: 17px; }
select + .ch { margin-left: 9px; }
.blend { display: flex; align-items: center; height: 74px; padding: 0 26px; }
.blend > svg:first-child { margin-right: 12px; }
.blend .opacity { width: 50px; margin-left: auto; }
.blend button { width: 22px; margin-left: 26px; }
.text-head { display: flex; justify-content: space-between; padding-right: 31px; }
.text-head button { padding-top: 25px; }
.font-row { display: flex; height: 50px; margin-top: 13px; padding: 0 26px; }
.weight-row { display: grid; grid-template-columns: 188px 1fr; height: 49px; align-items: center; padding-left: 26px; }
.weight-row div { display: flex; align-items: center; }
.type { grid-auto-rows: 50px; }
.type .resize { grid-column: 4 / span 2; align-self: start; margin-top: 6px; }
.help { position: absolute; right: 37px; bottom: 36px; width: 50px; height: 50px; border-radius: 50%; background: #1e1e1e; font-size: 28px; font-weight: 200; }

/* Windows taskbar */
.taskbar { flex: none; position: relative; display: flex; align-items: center; height: 59px; background: #202020; font: 15px/20px "Open Sans", sans-serif; }
.taskbar p { padding-bottom: 3px; }
.weather { display: flex; align-items: center; gap: 8px; flex: 1; padding-left: 24px; }
.weather small { font-size: inherit; color: #bdbdbd; }
.dock { display: flex; align-items: center; gap: 5px; }
.dock button { position: relative; width: 50px; height: 49px; border-radius: 5px; }
.dock .current { background: #2e2e2e; border: 1px solid #3a3a3a; }
.dock .running::after, .dock .current::after { content: ""; position: absolute; bottom: 0; left: 50%; width: 8px; height: 4px; margin-left: -4px; border-radius: 2px; background: #999; }
.dock .current::after { width: 20px; margin-left: -10px; background: #4cc2ff; }
.search { display: flex; align-items: center; gap: 12px; width: 274px; height: 40px; margin: 0 1px 0 2px; padding: 0 6px 0 14px; border: 1px solid #555; border-radius: 20px; background: #3c3c3c; font-size: 16px; }
.search input::placeholder { color: #d0d0d0; opacity: 1; }
.tray { flex: 1; display: flex; align-items: center; justify-content: flex-end; padding-right: 25px; }
.cloud { margin: 0 24px 0 22px; }
.lang { text-align: center; }
.status { display: flex; gap: 10px; margin: 0 20px; }
.clock { text-align: right; }
.count { width: 20px; height: 20px; margin-left: 10px; border-radius: 50%; background: #4cc2ff; color: #111; font-size: 13px; text-align: center; }
```
